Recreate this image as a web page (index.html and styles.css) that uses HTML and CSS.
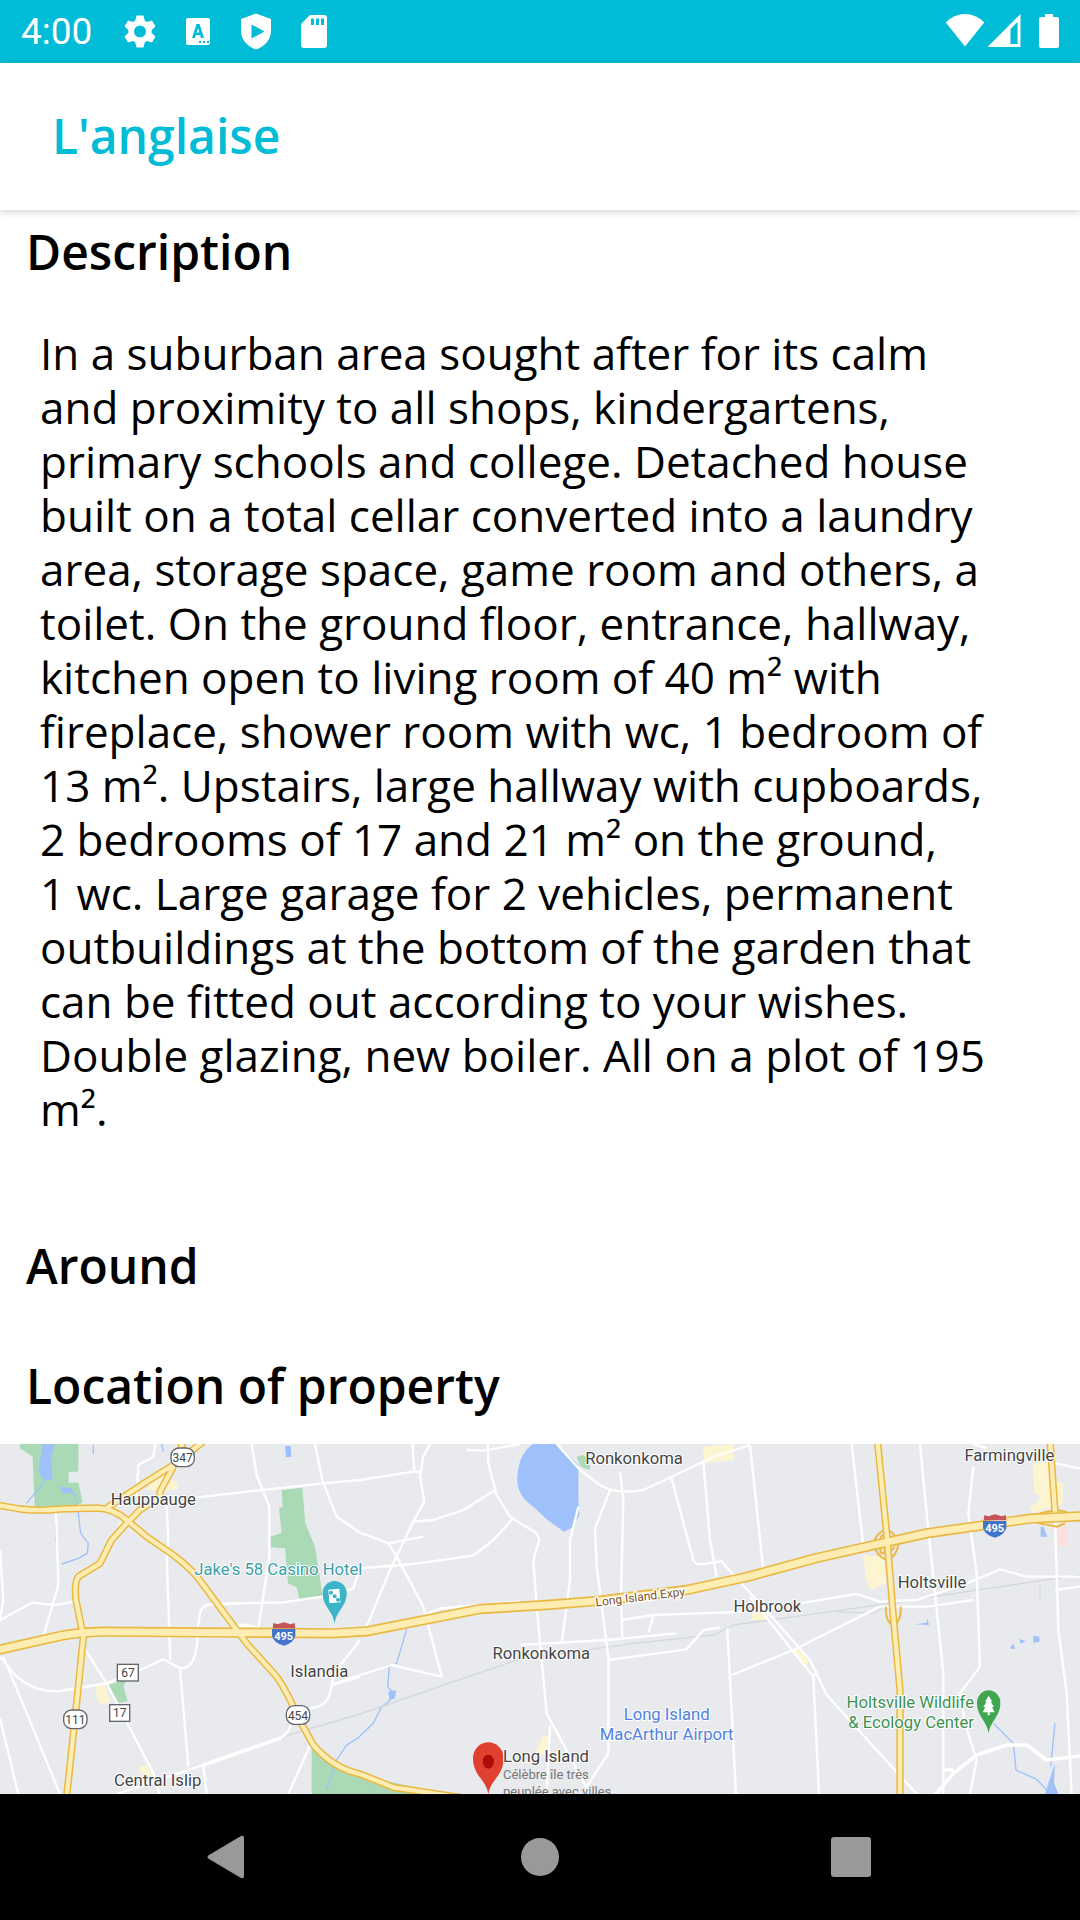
FILE: index.html
```html
<!DOCTYPE html>
<html lang="en">
<head>
<meta charset="utf-8">
<meta name="viewport" content="width=device-width, initial-scale=1">
<title>L'anglaise</title>
<link rel="stylesheet" href="styles.css">
</head>
<body>
<div class="status-bar">
  <span class="clock">4:00</span>
  <div class="status-icons">
    <svg class="icon" viewBox="0 0 40 40" aria-hidden="true"><path fill-rule="evenodd" d="M16.500 3.500h7l1.200 5 2.300 1.400 5-1.500 3.500 6-3.800 3.600v3l3.800 3.600-3.500 6-5-1.500-2.300 1.400-1.200 5h-7l-1.200-5-2.300-1.400-5 1.500-3.500-6L8.300 21v-3l-3.800-3.600 3.500-6 5 1.500 2.300-1.400zM20 13.500a6 6 0 1 0 0 12 6 6 0 0 0 0-12z"/></svg>
    <svg class="icon" viewBox="0 0 40 40" aria-hidden="true"><path fill-rule="evenodd" d="M10 6h20q2 0 2 2v23q0 2-2 2H10q-2 0-2-2V8q0-2 2-2zm8.500 6L14 26h3l.9-3h4.200l.9 3h3l-4.500-14zm.2 8.500 1.300-4.500 1.300 4.500zM21 29v2h2v-2zm4 0v2h2v-2zm4 0v2h2v-2z"/></svg>
    <svg class="icon" viewBox="0 0 40 40" aria-hidden="true"><path fill-rule="evenodd" d="M20 1.500 35 7v12c0 8.500-6 15.500-15 18.500C11 34.500 5 27.500 5 19V7zM15.500 12.500v14l13-7z"/></svg>
    <svg class="icon" viewBox="0 0 40 40" aria-hidden="true"><path fill-rule="evenodd" d="M16 3h14q3 0 3 3v27q0 3-3 3H10q-3 0-3-3V12zm1 3.500v6.500h3V6.500zm5 0v6.500h3V6.500zm5 0v6.500h3V6.500z"/></svg>
  </div>
  <div class="signal-icons">
    <svg class="icon" viewBox="0 0 40 40" aria-hidden="true"><path d="M20 34.500.8 10.500Q9 2 20 2t19.200 8.500z"/></svg>
    <svg class="icon" viewBox="0 0 40 40" aria-hidden="true"><path fill-rule="evenodd" d="M35.500 2v33h-33zm-3 8-7 7v15h7z"/></svg>
    <svg class="icon" viewBox="0 0 40 40" aria-hidden="true"><path d="M16 2h8v3h4q2 0 2 2v27q0 2-2 2H12q-2 0-2-2V7q0-2 2-2h4z"/></svg>
  </div>
</div>

<header class="app-bar"><h1 class="app-title">L'anglaise</h1></header>

<main class="content">
  <h2 class="heading">Description</h2>
  <p class="description">In a suburban area sought after for its calm<br>and proximity to all shops, kindergartens,<br>primary schools and college. Detached house<br>built on a total cellar converted into a laundry<br>area, storage space, game room and others, a<br>toilet. On the ground floor, entrance, hallway,<br>kitchen open to living room of 40 m² with<br>fireplace, shower room with wc, 1 bedroom of<br>13 m². Upstairs, large hallway with cupboards,<br>2 bedrooms of 17 and 21 m² on the ground,<br>1 wc. Large garage for 2 vehicles, permanent<br>outbuildings at the bottom of the garden that<br>can be fitted out according to your wishes.<br>Double glazing, new boiler. All on a plot of 195<br>m².</p>
  <h2 class="heading heading-around">Around</h2>
  <h2 class="heading heading-location">Location of property</h2>

  <svg class="map" viewBox="0 12 3240 1050" role="img" aria-label="Map of Long Island around Ronkonkoma">
    <defs>
      <g id="highways">
        <path d="M-20 193 60 207Q120 214 180 207L290 204Q340 205 380 240L440 290 520 345Q580 390 610 435L740 610 830 710Q865 760 890 825L940 915Q1000 985 1080 1002L1180 1042 1380 1072"/>
        <path d="M320 204 440 125 520 75 610 5M550 5 515 90 480 155 480 170 420 210 380 250 335 300 300 370 235 410Q222 430 228 480L250 590 235 740 200 1070"/>
        <path d="M2632 0 2660 280 2680 530 2700 750 2700 1070M3150 0 3165 215"/>
      </g>
      <path id="expressway" d="M-20 633 180 588Q240 576 310 575L720 578 1000 580 1100 574 1440 507 1640 495 1800 482 2060 450 2240 411 2450 354 2640 311 2780 280 3090 236 3260 228"/>
      <g id="ramps">
        <path d="M2620 310Q2630 275 2660 270Q2685 275 2696 310Q2690 350 2660 360Q2630 350 2620 310M2642 305Q2638 285 2654 284V305M2666 302Q2668 280 2684 300M2642 322Q2636 342 2654 340V320M2666 318Q2670 342 2684 320"/>
        <path d="M2658 500Q2655 545 2680 557Q2705 545 2702 500M3120 220 3170 210 3200 216M3110 248 3170 260 3195 250"/>
      </g>
    </defs>
    <rect class="map-land" x="0" y="0" width="3240" height="1080"/>
    <g class="map-park">
      <path d="M60 10H235V95H206V128H235L248 188 215 200H104L98 50 60 25zM845 150 907 143 916 250 945 320 968 468 898 476 890 442 864 430 855 325 812 322V290L845 278 837 205 848 200zM325 735 380 718 370 738 383 784 350 790zM935 925 975 960 1080 1010 1220 1062H935zM1080 1005 1370 1070H1080zM1730 50 1750 45 1770 60 1765 75H1770V90L1742 80z"/>
    </g>
    <g class="map-town">
      <path d="M350 240 380 265 360 265zM440 150 475 100 535 130 530 150 480 150zM288 740 315 732 330 785 305 795 290 775zM420 980 440 975 460 1010 420 1000zM1630 885 1645 890 1640 935 1605 960 1610 930zM2110 20 2200 12V60L2110 70zM2590 345 2650 350 2660 430 2610 450 2598 415zM2255 520 2310 515 2300 540H2255zM2380 630 2400 630 2425 665 2420 685zM3098 70 3150 68 3150 125 3190 130V190L3100 220 3088 200 3110 190 3120 165 3103 160z"/>
      <path class="map-clinic" d="M3173 255H3200V318H3175z"/>
    </g>
    <g class="map-water">
      <path d="M128 12H165L153 55 158 120 130 118 115 95zM1600 12H1670L1735 75 1735 180 1738 225 1720 260 1692 275 1640 238 1600 200Q1548 165 1552 110 1556 40 1600 12zM180 140 215 145 230 180 215 160 185 158zM855 18 872 18 874 50 858 52zM1165 755 1188 750 1185 775 1168 780zM3122 260 3130 260 3142 290 3122 290zM2745 553 2780 548 2782 535 2787 555zM3100 587 3118 590 3118 605 3100 608zM3058 597 3077 603 3062 612zM3030 625 3040 610 3045 628zM3155 1000 3165 970 3162 1030 3175 1062H3135L3145 1030z"/>
      <path class="map-stream" d="M150 105 80 190M230 180 242 280 265 310 262 340 235 355 185 372M280 14V42M168 250V305M485 12 490 35M1220 568 1190 670 1168 680 1163 740 1185 765 1160 790 1145 800 1120 850 1080 888M1080 890 1040 915 1010 960 980 1050M2980 850 3040 910 3048 990 3110 1018 3140 1050M3165 850 3152 980"/>
    </g>
    <path class="map-rail" d="M840 893 1080 822 1550 660 1900 610 2140 585 2200 555 2600 500 2900 455 3240 405M2510 515 2620 520 2650 500M3120 475V435"/>
    <g class="map-road">
      <path d="M465 12 460 50 415 75 410 170M590 172 970 130 1080 120 1240 95H1262M1237 12 1243 90M500 200 505 300 500 350 511 660M168 215 175 435 130 590M0 330 10 480 0 540 95 488 165 495 225 485M755 12 770 105 808 200V350L775 565M945 12 968 125 1010 230 1080 278 1165 310 1190 350 1270 500 1325 710 1175 675 1080 705 1000 732M590 585 600 520Q605 490 650 492L850 487 1000 465 1060 445 1080 385 1240 372 1420 347 1480 300 1540 235M0 650 50 710Q110 760 180 753L320 730 420 690 490 658 540 685Q590 690 593 585M10 650 180 1062M0 835 55 1062M250 620 320 730 460 1000 478 1062M540 685 565 980M350 1062 610 975 840 895Q870 880 875 840M610 975 620 1062M865 1062 932 912 975 960M930 805Q980 800 990 760L1003 700 1080 600M1000 735 1080 710"/>
      <path d="M1290 12 1270 50 1260 110 1273 185 1240 245 1300 240 1390 210 1485 150M1240 245 1170 390 1100 560M1270 290 1165 310M1400 30 1450 32 1560 12M1463 12 1465 70 1490 165 1530 230 1610 280 1618 300 1600 360 1610 500 1640 820 1770 1062M1240 540 1320 505 1560 485M1670 12 1740 90 1800 135Q1850 165 1930 150L2020 108 2160 42M1860 95 1870 180 1863 470 1867 590M1735 200 1710 300 1710 420 1685 610M1830 150 1785 265 1790 380 1825 650V940L1760 1040M2013 110 2080 360Q2085 375 2110 372L2160 365M2110 65 2130 300 2150 410M1560 615 1820 600 2030 580M1865 540 1960 525 2240 515 2400 490 2570 462 2640 485 2750 480 2900 430 3000 388 3080 410H3240M1960 530 1945 578M1825 660 2060 628 2110 570 2160 563M1650 855 1640 1062"/>
      <path d="M2160 45 2250 15M2250 15 2290 390M2555 12 2590 320M2760 12 2780 220 2830 700V1062M2160 360 2270 480 2430 660 2480 765 2750 1062M2250 470 2440 710 2457 1062M2440 710 2450 690M2182 565 2208 1062M2195 705 2380 630 2640 500 2780 500 2920 480M2920 80 2905 220 2930 400 2940 680 2880 760 2895 850 2930 960 2910 1062M2920 12 2960 25M3165 230 3175 570 3200 760 3215 1062M3165 450 3240 440M3140 65 3240 85"/>
      <path class="map-road-wide" d="M2800 1072 2860 1000 2930 945 3020 915H3080L3140 960 3240 948M610 975 840 895M690 570Q725 545 770 565M2830 990H2860"/>
    </g>
    <use href="#highways" class="highway-edge"/>
    <use href="#ramps" class="ramp"/>
    <use href="#expressway" class="highway-edge highway-edge-wide"/>
    <use href="#highways" class="highway-fill"/>
    <use href="#expressway" class="highway-fill highway-fill-wide"/>

    <g class="shield">
      <rect x="513" y="24" width="70" height="56" rx="24"/><rect x="191" y="810" width="70" height="56" rx="24"/><rect x="859" y="797" width="70" height="56" rx="24"/>
      <rect x="352" y="673" width="63" height="50"/><rect x="329" y="794" width="60" height="50"/>
    </g>
    <g class="shield-text">
      <text x="548" y="67">347</text><text x="226" y="853">111</text><text x="894" y="840">454</text><text x="384" y="710">67</text><text x="359" y="831">17</text>
    </g>
    <g id="interstate">
      <path class="interstate-top" d="M820 549 832 553 852 547 872 553 884 549 886 565H818z"/>
      <path class="interstate-body" d="M816 567H886V588Q880 610 852 617 822 610 816 588z"/>
      <text class="interstate-text" x="851" y="599">495</text>
    </g>
    <use href="#interstate" x="2133" y="-324"/>

    <path class="pin-hotel" d="M1004 551C998 510 968 500 968 460A36 37 0 0 1 1040 460C1040 500 1010 510 1004 551z"/>
    <path class="pin-mark" d="M985 449 1018 446 1021 487 988 490z"/>
    <g class="pin-hotel"><circle cx="993" cy="458" r="6"/><circle cx="1004" cy="469" r="6"/><circle cx="1014" cy="479" r="6"/></g>
    <path class="pin-nature" d="M2966 880C2960 840 2931 830 2931 788A35 37 0 0 1 3001 788C3001 830 2972 840 2966 880z"/>
    <path class="pin-mark" d="M2966 767 2977 785H2972L2982 801H2976L2984 817H2969V826H2963V817H2948L2956 801H2950L2960 785H2955z"/>
    <path class="pin-place" d="M1465 1066C1462 1020 1419 1010 1419 954A46 47 0 0 1 1511 954C1511 1010 1468 1020 1465 1066z"/>
    <ellipse class="pin-core" cx="1465" cy="965" rx="17" ry="21"/>

    <g class="place">
      <text x="460" y="196">Hauppauge</text><text x="958" y="710">Islandia</text><text x="473" y="1038">Central Islip</text>
      <text x="1902" y="71">Ronkonkoma</text><text x="1624" y="658">Ronkonkoma</text><text x="3028" y="63">Farmingville</text>
      <text x="2302" y="516">Holbrook</text><text x="2796" y="444">Holtsville</text>
    </g>
    <text class="place place-hotel" x="835" y="404">Jake's 58 Casino Hotel</text>
    <text class="place place-airport"><tspan x="2000" y="840">Long Island</tspan><tspan x="2000" y="900">MacArthur Airport</tspan></text>
    <text class="place place-nature"><tspan x="2922" y="803">Holtsville Wildlife</tspan><tspan x="2922" y="864">&amp; Ecology Center</tspan></text>
    <text class="place place-main" x="1509" y="965">Long Island</text>
    <text class="place-note"><tspan x="1509" y="1017">Célèbre île très</tspan><tspan x="1509" y="1069">peuplée avec villes</tspan></text>
    <text class="road-name" x="1922" y="483" transform="rotate(-7 1922 483)">Long Island Expy</text>
  </svg>
</main>

<nav class="nav-bar" aria-label="System navigation">
  <button class="nav-button" type="button" aria-label="Back"><svg class="nav-icon" viewBox="0 0 48 48"><path d="M39 5v38q0 3-3 2L4 26q-3-2 0-4L36 3q3-1 3 2z"/></svg></button>
  <button class="nav-button" type="button" aria-label="Home"><svg class="nav-icon" viewBox="0 0 48 48"><circle cx="24" cy="24" r="19"/></svg></button>
  <button class="nav-button" type="button" aria-label="Recent apps"><svg class="nav-icon" viewBox="0 0 48 48"><rect x="4" y="4" width="40" height="40" rx="3"/></svg></button>
</nav>
</body>
</html>
```

FILE: styles.css
```css
* { box-sizing: border-box; }

body {
  margin: 0;
  min-height: 100vh;
  display: flex;
  flex-direction: column;
  background: #fff;
  color: #000;
  font-family: "Open Sans", sans-serif;
}

h1, h2, p { margin: 0; }

.status-bar {
  display: flex;
  align-items: center;
  height: 63px;
  padding: 0 11px 0 21px;
  background: #00bcd7;
  color: #fff;
}
.clock { font: 400 37px/44px Roboto, sans-serif; }
.status-icons { display: flex; gap: 18px; margin-left: 28px; }
.signal-icons { display: flex; align-items: center; margin-left: auto; }
.icon { display: block; width: 40px; height: 40px; fill: #fff; }
.signal-icons .icon:last-child { margin-left: 4px; }

.app-bar {
  display: flex;
  align-items: center;
  min-height: 147px;
  padding: 0 52px 2px;
  box-shadow: 0 2px 8px rgba(0, 0, 0, .18);
}
.app-title { color: #00bcd7; font-size: 48px; line-height: 60px; font-weight: 600; }

.content { flex: 1; padding-top: 12px; }
.heading { padding: 0 26px; font-size: 48px; line-height: 60px; font-weight: 600; }
.description { padding: 44px 40px 0; font-size: 44px; line-height: 54px; white-space: nowrap; }
.heading-around { margin-top: 100px; }
.heading-location { margin-top: 60px; }

.map { display: block; width: 100%; margin-top: 28px; font-family: Roboto, sans-serif; }
.map-land { fill: #e8eaed; }
.map-park { fill: #aadab5; }
.map-town { fill: #fdf4d0; }
.map-clinic { fill: #fbe0dd; }
.map-water { fill: #9fc1fb; }
.map-stream { fill: none; stroke: #9fc1fb; stroke-width: 4; }
.map-rail { fill: none; stroke: #d5d8db; stroke-width: 4; }
.map-road { fill: none; stroke: #fff; stroke-width: 7; stroke-linejoin: round; }
.map-road-wide { stroke-width: 11; }
.highway-edge { fill: none; stroke: #eab842; stroke-width: 22; stroke-linejoin: round; }
.highway-edge-wide { stroke-width: 31; }
.highway-fill { fill: none; stroke: #feedb3; stroke-width: 13; stroke-linejoin: round; }
.highway-fill-wide { stroke-width: 21; }
.ramp { fill: none; stroke: #eab842; stroke-width: 6; }

.shield { fill: #fff; stroke: #63666a; stroke-width: 4; }
.shield-text { fill: #444; font-size: 36px; text-anchor: middle; }
.interstate-top { fill: #c5535a; }
.interstate-body { fill: #4374cc; }
.interstate-text { fill: #fff; font-size: 33px; font-weight: 700; text-anchor: middle; }

.pin-hotel { fill: #3cb4c8; }
.pin-nature { fill: #40a650; }
.pin-place { fill: #e04030; }
.pin-core { fill: #a90d06; }
.pin-mark { fill: #fff; }

.place {
  fill: #444;
  font-size: 50px;
  text-anchor: middle;
  stroke: #fff;
  stroke-width: 6;
  stroke-linejoin: round;
  paint-order: stroke;
}
.place-hotel { fill: #3a9fa8; }
.place-airport { fill: #5181dc; }
.place-nature { fill: #3d9150; text-anchor: end; }
.place-main { text-anchor: start; }
.place-note { fill: #777; font-size: 39px; }
.road-name { fill: #80552b; font-size: 36px; text-anchor: middle; stroke: #fff; stroke-width: 8; paint-order: stroke; }

.nav-bar {
  display: flex;
  justify-content: center;
  gap: 183px;
  height: 126px;
  background: #000;
}
.nav-button {
  display: grid;
  place-items: center;
  width: 128px;
  padding: 0;
  border: 0;
  background: none;
}
.nav-icon { width: 48px; height: 48px; fill: #999; }
```
